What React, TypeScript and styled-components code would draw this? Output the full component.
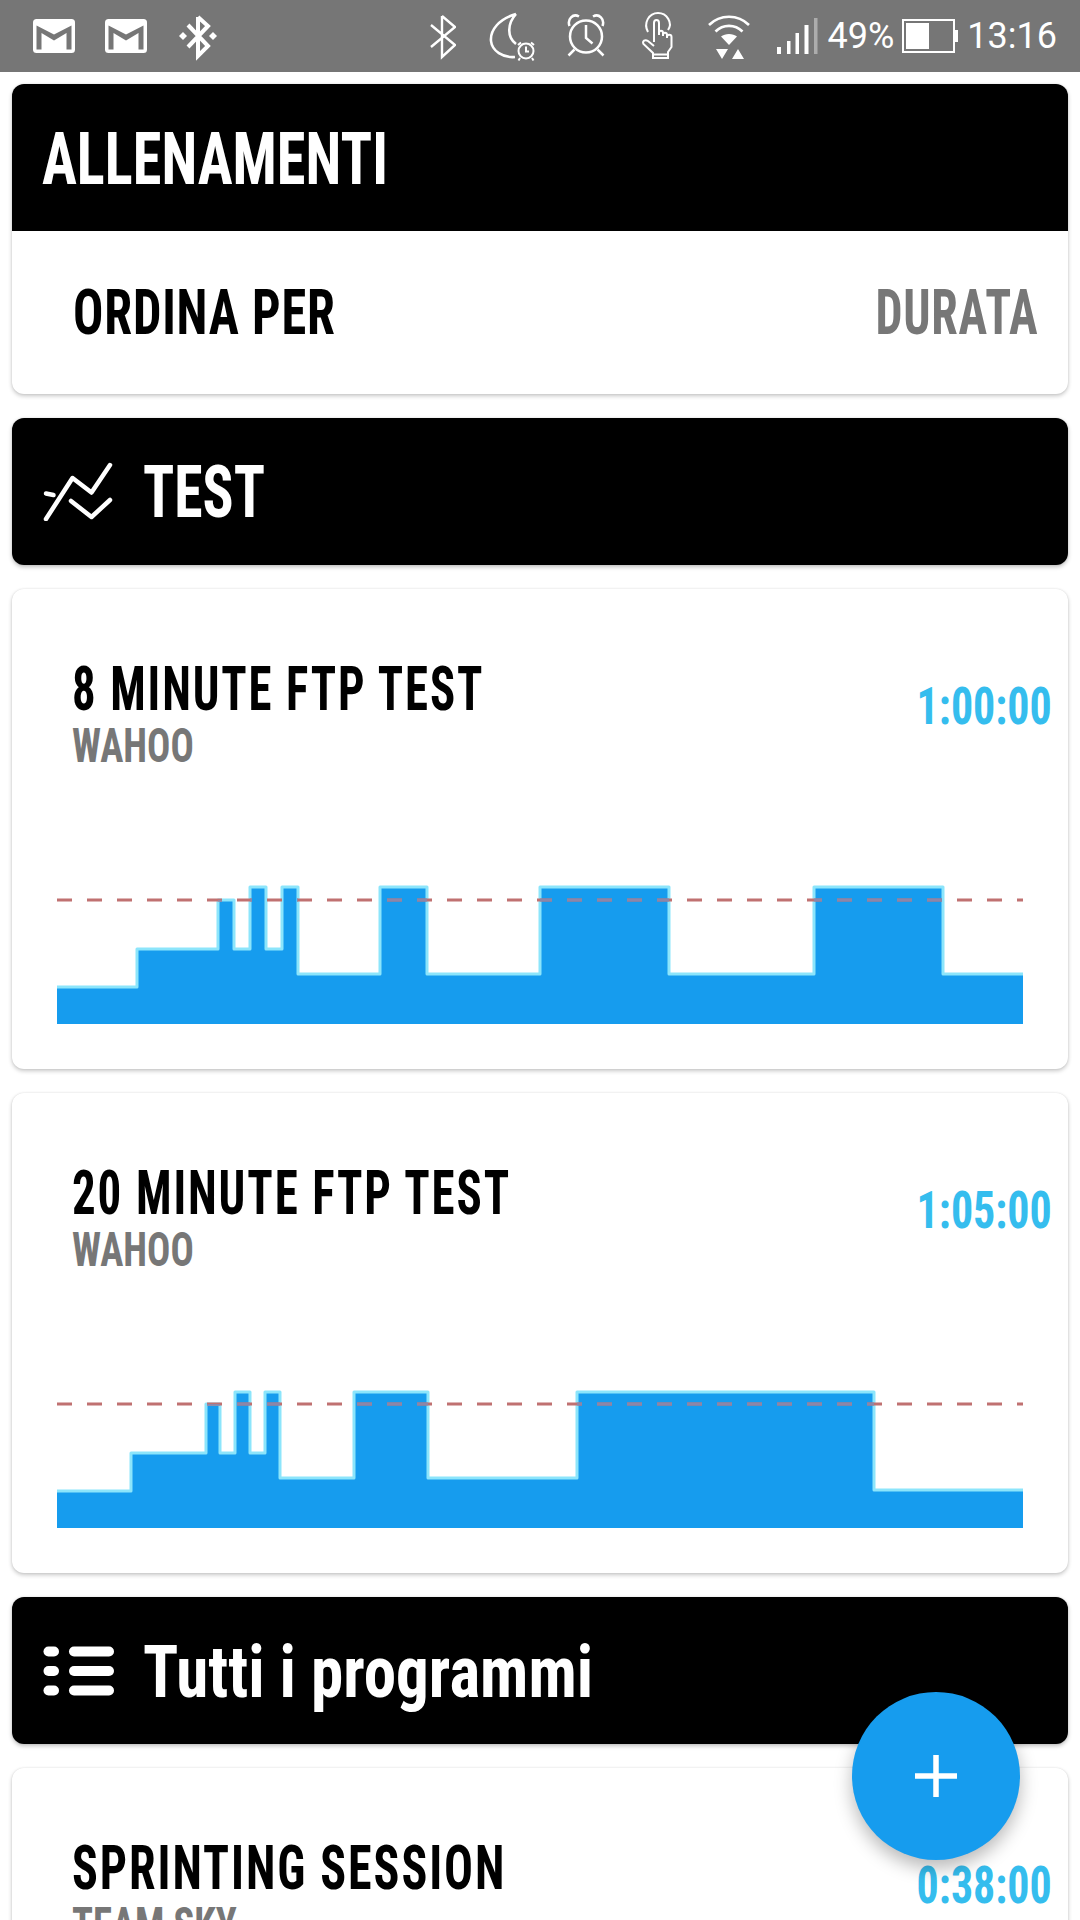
import React from 'react';
import styled, { createGlobalStyle } from 'styled-components';

const GlobalStyle = createGlobalStyle`
	html, body {
		margin: 0;
		padding: 0;
		background: #fff;
	}
	body {
		width: 1080px;
		height: 1920px;
		overflow: hidden;
		font-family: 'Roboto Condensed', Roboto, sans-serif;
	}
`;

const Page = styled.div`
	position: relative;
	width: 1080px;
	height: 1920px;
	overflow: hidden;
`;

/* status bar */

const StatusBar = styled.div`
	display: flex;
	align-items: center;
	height: 72px;
	padding: 0 23px 0 33px;
	background: #767676;
	color: #fff;
`;

const StatusGroup = styled.div`
	display: flex;
	align-items: center;
`;

const RightGroup = styled(StatusGroup)`
	margin-left: auto;
`;

const StatusIcon = styled.svg<{ $ml?: number }>`
	display: block;
	flex: none;
	height: 52px;
	margin-left: ${({ $ml }) => $ml ?? 0}px;
	fill: none;
	stroke: #fff;
`;

const StatusText = styled.span<{ $ml: number }>`
	margin-left: ${({ $ml }) => $ml}px;
	font-family: Roboto, sans-serif;
	font-size: 36px;
	font-weight: 400;
	line-height: 52px;
	white-space: nowrap;
`;

const MailIcon = ({ ml }: { ml?: number }): JSX.Element => (
	<StatusIcon $ml={ml} width="42" viewBox="0 0 42 52">
		<rect x="0" y="9" width="42" height="34" rx="3.5" fill="#fff" stroke="none" />
		<path d="M3.5 39.500V15.500L21 24.500L38.500 15.500V39.500H33.500V23L21 30.500L8.500 23V39.500Z" fill="#767676" stroke="none" />
	</StatusIcon>
);

const BoldBluetoothIcon = ({ ml }: { ml?: number }): JSX.Element => (
	<StatusIcon $ml={ml} width="38" viewBox="0 0 38 52">
		<path d="M19 7V46L29 36L9 15M19 7L29 16L9 37" strokeWidth="4" />
		<path d="M4 22L8 26L4 30L0 26ZM34 22L38 26L34 30L30 26Z" fill="#fff" stroke="none" />
	</StatusIcon>
);

const BluetoothIcon = ({ ml }: { ml?: number }): JSX.Element => (
	<StatusIcon $ml={ml} width="26" viewBox="0 0 26 52">
		<path d="M12 6V47L25 35L1 15M12 6L25 17L1 37" strokeWidth="2.4" />
	</StatusIcon>
);

const MoonIcon = ({ ml }: { ml?: number }): JSX.Element => (
	<StatusIcon $ml={ml} width="48" viewBox="0 0 48 52">
		<path d="M27 4C10 9 1 20 2 31C3 41 14 48 26 47M27 4C18 14 18 27 27 34" strokeWidth="2.6" />
		<circle cx="37" cy="41" r="7.5" strokeWidth="2" />
		<path d="M37 36.500V41.500H40M29 35L32 32.500M45 35L42 32.500M31 48L29.500 50.500M43 48L44.500 50.500" strokeWidth="2" />
	</StatusIcon>
);

const AlarmIcon = ({ ml }: { ml?: number }): JSX.Element => (
	<StatusIcon $ml={ml} width="38" viewBox="0 0 38 52">
		<circle cx="19" cy="26.500" r="16" strokeWidth="2.5" />
		<path d="M19 15V28L25.500 33.500M2.500 16C0 9 6 3 12 6.500M35.500 16C38 9 32 3 26 6.500M7.500 39.500L1.500 45.500M30.500 39.500L36.500 45.500" strokeWidth="2.5" />
	</StatusIcon>
);

const TouchIcon = ({ ml }: { ml?: number }): JSX.Element => (
	<StatusIcon $ml={ml} width="31" viewBox="0 0 31 52">
		<path d="M6 22C1 13 7 3 16 3C25 3 31 13 26 20" strokeWidth="2" />
		<path d="M12 32V13C12 9 17 9 17 13V25M17 23C17 20 21 20 21 23V26M21 25C21 22 25 22 25 25V28M25 27C25 24 29.500 24 29.500 27V37L26 42V48H11V43L1.500 34C0 31 3 29 6 31L12 36M11 44.500H26" strokeWidth="2" />
	</StatusIcon>
);

const WifiIcon = ({ ml }: { ml?: number }): JSX.Element => (
	<StatusIcon $ml={ml} width="42" viewBox="0 0 42 52">
		<path d="M1 15C12 4 30 4 41 15M7.500 21.500C15 14 27 14 34.500 21.500" strokeWidth="2.600" />
		<path d="M13 26.500C17 23 25 23 29 26.500L21 35Z" fill="#fff" stroke="none" />
		<path d="M8 39H20L14 49ZM24 49L30 39L36 49Z" fill="#fff" stroke="none" />
	</StatusIcon>
);

const SignalIcon = ({ ml }: { ml?: number }): JSX.Element => (
	<StatusIcon $ml={ml} width="41" viewBox="0 0 41 52" stroke="none">
		<rect x="0" y="37" width="4" height="7" fill="#fff" stroke="none" />
		<rect x="10" y="31" width="3.500" height="13" fill="#fff" stroke="none" />
		<rect x="18.500" y="23" width="3.500" height="21" fill="#fff" stroke="none" />
		<rect x="27.500" y="15" width="4" height="29" fill="#fff" stroke="none" />
		<rect x="37" y="8" width="3.500" height="36" fill="#acacac" stroke="none" />
	</StatusIcon>
);

const BatteryIcon = ({ ml }: { ml?: number }): JSX.Element => (
	<StatusIcon $ml={ml} width="56" viewBox="0 0 56 52">
		<rect x="1" y="10" width="51" height="32" strokeWidth="2" />
		<rect x="4" y="13" width="23" height="26" fill="#fff" stroke="none" />
		<rect x="53" y="20" width="3" height="12" fill="#fff" stroke="none" />
	</StatusIcon>
);

/* cards */

const Content = styled.main`
	display: flex;
	flex-direction: column;
	gap: 24.2px;
	padding: 12px 12px 0;
`;

const Panel = styled.section`
	overflow: hidden;
	flex: none;
	border-radius: 12px;
	background: #fff;
	box-shadow: 0 2px 4px rgba(0, 0, 0, 0.22), 0 0 2px rgba(0, 0, 0, 0.1);
`;

const BlackBar = styled.header`
	display: flex;
	align-items: center;
	flex: none;
	height: 147px;
	padding-left: 31px;
	border-radius: 12px;
	background: #000;
	box-shadow: 0 2px 4px rgba(0, 0, 0, 0.25), 0 0 2px rgba(0, 0, 0, 0.1);
`;

const PanelBar = styled(BlackBar)`
	border-radius: 0;
	box-shadow: none;
`;

const BarIcon = styled.svg`
	display: block;
	flex: none;
	width: 72px;
	height: 60px;
	margin-right: 29px;
`;

const BarTitle = styled.span<{ $sx: number }>`
	display: inline-block;
	margin-top: 3px;
	margin-left: -1px;
	color: #fff;
	font-size: 73px;
	font-weight: 700;
	font-stretch: 75%;
	line-height: 1;
	white-space: nowrap;
	transform: scaleX(${({ $sx }) => $sx});
	transform-origin: left center;
`;

const SortRow = styled.div`
	display: flex;
	align-items: center;
	justify-content: space-between;
	height: 162.5px;
	padding: 0 30px 0 61px;
`;

const SortLabel = styled.span`
	display: inline-block;
	color: #000;
	font-size: 63px;
	font-weight: 700;
	font-stretch: 75%;
	line-height: 1;
	white-space: nowrap;
	letter-spacing: 1px;
	transform: scaleX(0.8);
	transform-origin: left center;
`;

const SortValue = styled(SortLabel)`
	color: #777;
	transform: scaleX(0.76);
	transform-origin: right center;
`;

const WorkoutCard = styled(Panel)`
	display: flex;
	flex-direction: column;
	height: 480px;
`;

const WorkoutHead = styled.div`
	display: flex;
	align-items: flex-start;
	justify-content: space-between;
	padding: 69px 16px 0 60px;
`;

const WorkoutInfo = styled.div`
	display: flex;
	flex-direction: column;
`;

const WorkoutTitle = styled.span<{ $sx: number }>`
	display: inline-block;
	color: #000;
	font-size: 62px;
	font-weight: 700;
	font-stretch: 75%;
	line-height: 62px;
	letter-spacing: 2.5px;
	white-space: nowrap;
	transform: scaleX(${({ $sx }) => $sx});
	transform-origin: left center;
`;

const WorkoutSource = styled.span`
	display: inline-block;
	margin-top: 1px;
	color: #777;
	font-size: 49px;
	font-weight: 700;
	font-stretch: 75%;
	line-height: 49px;
	white-space: nowrap;
	transform: scaleX(0.79);
	transform-origin: left center;
`;

const Duration = styled.span`
	display: inline-block;
	margin-top: 23px;
	color: #35bdee;
	font-size: 52px;
	font-weight: 700;
	font-stretch: 75%;
	line-height: 52px;
	white-space: nowrap;
	transform: scaleX(0.846);
	transform-origin: right center;
`;

const ChartSvg = styled.svg`
	display: block;
	flex: none;
	width: 966px;
	height: 140px;
	margin: auto 0 45px 45px;
`;

const Fab = styled.button`
	position: absolute;
	right: 60px;
	bottom: 60px;
	display: flex;
	align-items: center;
	justify-content: center;
	width: 168px;
	height: 168px;
	padding: 0;
	border: 0;
	border-radius: 50%;
	background: #169cee;
	box-shadow: 0 8px 18px rgba(0, 0, 0, 0.28);
`;

const CHART_HEIGHT = 140;

// each step: [x where the step ends, power level], measured from the chart's bottom left
type Step = [number, number];

const FTP_8: Step[] = [
	[80, 37], [161, 75], [177, 124], [193, 75], [209, 137], [225, 75], [241, 137],
	[323, 50], [370, 137], [483, 50], [612, 137], [757, 50], [886, 137], [966, 50],
];

const FTP_20: Step[] = [
	[74, 37], [149, 75], [163, 124], [178, 75], [193, 136], [208, 75], [223, 136],
	[297, 50], [371, 136], [520, 50], [817, 136], [966, 38],
];

const outlineOf = (steps: Step[]): string => {
	let x = 0;
	return steps
		.map(([end, level], i) => {
			const y = CHART_HEIGHT - level;
			const part = `${i === 0 ? 'M' : 'L'}${x} ${y}L${end} ${y}`;
			x = end;
			return part;
		})
		.join('');
};

const WorkoutChart = ({ id, steps }: { id: string; steps: Step[] }): JSX.Element => {
	const outline = outlineOf(steps);
	const area = `${outline}L966 ${CHART_HEIGHT}L0 ${CHART_HEIGHT}Z`;
	return (
		<ChartSvg viewBox={`0 0 966 ${CHART_HEIGHT}`}>
			<defs>
				<clipPath id={id}>
					<path d={area} />
				</clipPath>
			</defs>
			<path d={area} fill="#169cee" />
			<path d={outline} fill="none" stroke="#8ce5fb" strokeWidth="3" strokeLinejoin="round" />
			<line x1="0" y1="16" x2="966" y2="16" stroke="#c07171" strokeWidth="3" strokeDasharray="15 15" />
			<line
				x1="0"
				y1="16"
				x2="966"
				y2="16"
				stroke="#8d86a8"
				strokeWidth="3"
				strokeDasharray="15 15"
				clipPath={`url(#${id})`}
			/>
		</ChartSvg>
	);
};

interface IWorkoutProps {
	title: string;
	titleScale: number;
	source: string;
	duration: string;
	chartId?: string;
	steps?: Step[];
}

const Workout = ({ title, titleScale, source, duration, chartId, steps }: IWorkoutProps): JSX.Element => (
	<WorkoutCard>
		<WorkoutHead>
			<WorkoutInfo>
				<WorkoutTitle $sx={titleScale}>{title}</WorkoutTitle>
				<WorkoutSource>{source}</WorkoutSource>
			</WorkoutInfo>
			<Duration>{duration}</Duration>
		</WorkoutHead>
		{chartId && steps && <WorkoutChart id={chartId} steps={steps} />}
	</WorkoutCard>
);

export default function App(): JSX.Element {
	return (
		<Page>
			<GlobalStyle />
			<StatusBar>
				<StatusGroup>
					<MailIcon />
					<MailIcon ml={30} />
					<BoldBluetoothIcon ml={32} />
				</StatusGroup>
				<RightGroup>
					<BluetoothIcon />
					<MoonIcon ml={33} />
					<AlarmIcon ml={30} />
					<TouchIcon ml={37} />
					<WifiIcon ml={35} />
					<SignalIcon ml={27} />
					<StatusText $ml={10}>49%</StatusText>
					<BatteryIcon ml={8} />
					<StatusText $ml={9}>13:16</StatusText>
				</RightGroup>
			</StatusBar>
			<Content>
				<Panel>
					<PanelBar>
						<BarTitle $sx={0.8}>ALLENAMENTI</BarTitle>
					</PanelBar>
					<SortRow>
						<SortLabel>ORDINA PER</SortLabel>
						<SortValue>DURATA</SortValue>
					</SortRow>
				</Panel>
				<BlackBar>
					<BarIcon viewBox="0 0 72 60" fill="none" stroke="#fff" strokeWidth="4.5" strokeLinecap="round" strokeLinejoin="round">
						<path d="M3 58L29.500 17L48.500 31.500L67 4" />
						<path d="M28 40L48.500 56L67 39" />
						<path d="M3 32.500L10.500 34" />
					</BarIcon>
					<BarTitle $sx={0.79}>TEST</BarTitle>
				</BlackBar>
				<Workout title="8 MINUTE FTP TEST" titleScale={0.755} source="WAHOO" duration="1:00:00" chartId="ftp8" steps={FTP_8} />
				<Workout title="20 MINUTE FTP TEST" titleScale={0.757} source="WAHOO" duration="1:05:00" chartId="ftp20" steps={FTP_20} />
				<BlackBar>
					<BarIcon viewBox="0 0 72 60" fill="#fff">
						<rect x="0.500" y="5.500" width="15.500" height="10" rx="5" />
						<rect x="26" y="5.500" width="45" height="10" rx="5" />
						<rect x="0.500" y="25" width="15.500" height="10" rx="5" />
						<rect x="26" y="25" width="45" height="10" rx="5" />
						<rect x="0.500" y="44.500" width="15.500" height="10" rx="5" />
						<rect x="26" y="44.500" width="45" height="10" rx="5" />
					</BarIcon>
					<BarTitle $sx={0.892}>Tutti i programmi</BarTitle>
				</BlackBar>
				<Workout title="SPRINTING SESSION" titleScale={0.774} source="TEAM SKY" duration="0:38:00" />
			</Content>
			<Fab aria-label="Aggiungi">
				<svg width="42" height="42" viewBox="0 0 42 42" fill="none" stroke="#fff" strokeWidth="5.500">
					<path d="M21 0V42M0 21H42" />
				</svg>
			</Fab>
		</Page>
	);
}
